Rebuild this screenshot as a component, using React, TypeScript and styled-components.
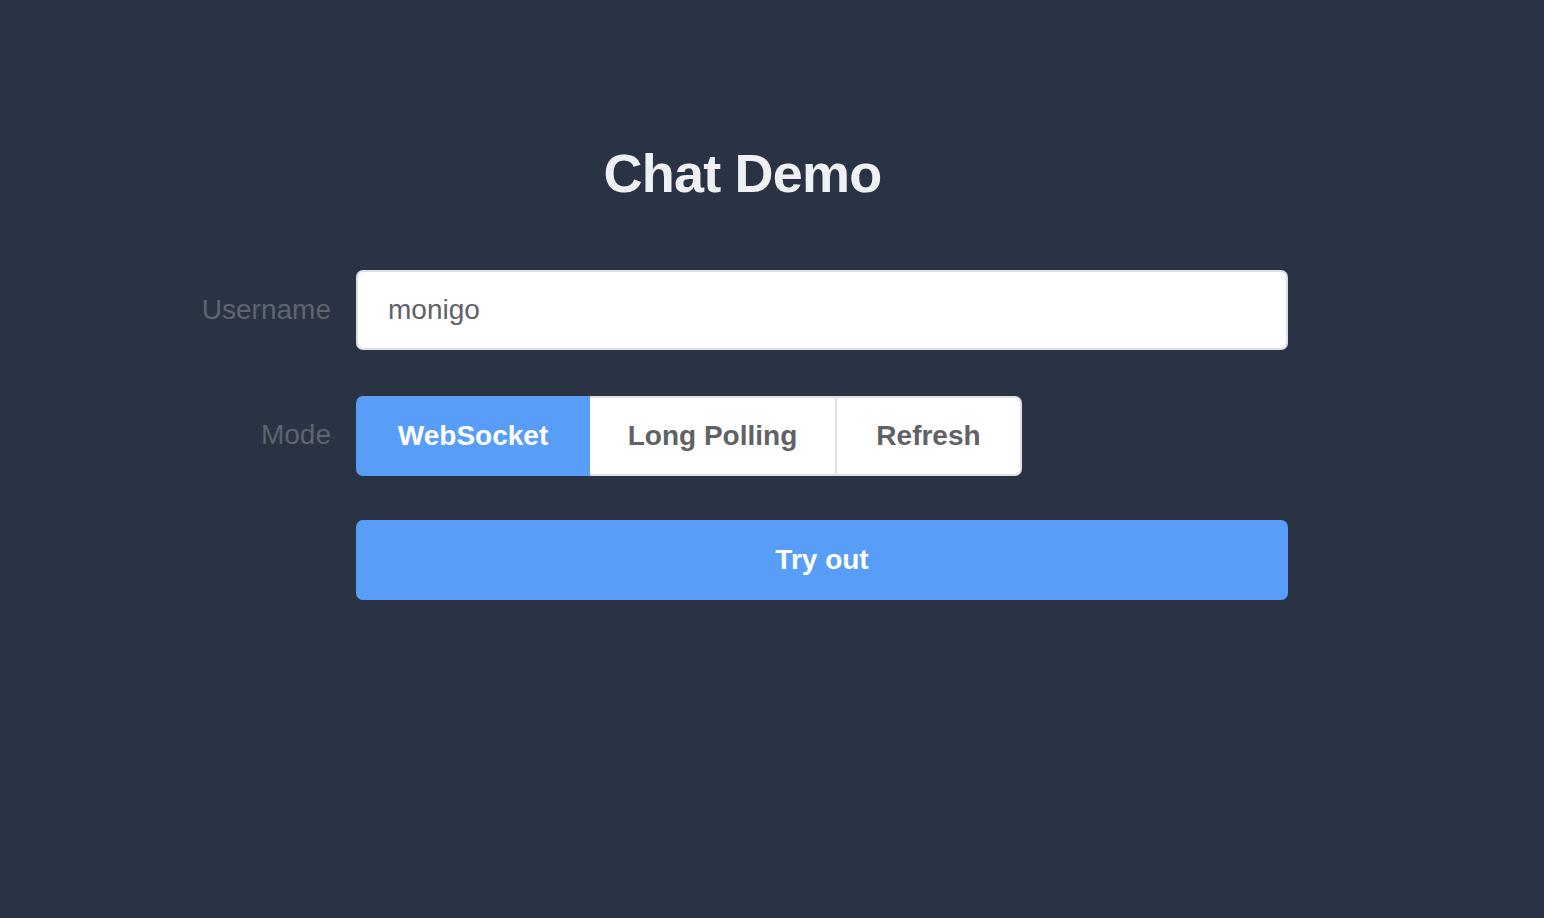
import React from "react";
import styled, { createGlobalStyle } from "styled-components";

const Global = createGlobalStyle`
  html, body { margin: 0; padding: 0; background: #2a3344; }
  body { font-family: "Liberation Sans", Arial, sans-serif; }
  * { box-sizing: border-box; }
`;

const Page = styled.div`
  width: 1544px;
  height: 918px;
  background: #2a3344;
  padding-top: 140px;
`;

const Panel = styled.div`
  margin-left: 197px;
  width: 1091px;
  display: flex;
  flex-direction: column;
`;

const Title = styled.h1`
  margin: 0 0 64px 0;
  text-align: center;
  color: #eef0f3;
  font-size: 54px;
  font-weight: 700;
  letter-spacing: -0.8px;
  line-height: 66px;
`;

const Row = styled.div<{ $gap: number }>`
  display: grid;
  grid-template-columns: 159px 1fr;
  align-items: center;
  margin-bottom: ${(p) => p.$gap}px;
`;

const Label = styled.label<{ $shift?: number }>`
  text-align: right;
  padding-right: 25px;
  color: #5f646e;
  font-size: 28px;
  margin-top: ${(p) => p.$shift ?? 0}px;
`;

const Input = styled.input`
  height: 80px;
  width: 100%;
  border: 2px solid #dcdfe6;
  border-radius: 7px;
  background: #fff;
  padding: 0 30px;
  font-family: inherit;
  font-size: 28px;
  color: #606266;
  outline: none;
`;

const Group = styled.div`
  display: flex;
`;

const Seg = styled.button<{ $active?: boolean; $w: number }>`
  width: ${(p) => p.$w}px;
  height: 80px;
  border: 2px solid ${(p) => (p.$active ? "#589ef8" : "#dcdfe6")};
  border-left-width: ${(p) => (p.$active ? 2 : 0)}px;
  background: ${(p) => (p.$active ? "#589ef8" : "#fff")};
  color: ${(p) => (p.$active ? "#fff" : "#606266")};
  font-family: inherit;
  font-size: 28px;
  font-weight: 700;
  padding: 0;
  &:first-child { border-radius: 7px 0 0 7px; }
  &:last-child { border-radius: 0 7px 7px 0; }
`;

const Submit = styled.button`
  grid-column: 2;
  height: 80px;
  width: 100%;
  border: none;
  border-radius: 7px;
  background: #589ef8;
  color: #fff;
  font-family: inherit;
  font-size: 28px;
  font-weight: 700;
`;

export default function App() {
  return (
    <Page>
      <Global />
      <Panel>
        <Title>Chat Demo</Title>
        <Row $gap={46}>
          <Label>Username</Label>
          <Input defaultValue="monigo" />
        </Row>
        <Row $gap={44}>
          <Label $shift={-2}>Mode</Label>
          <Group>
            <Seg $active $w={234}>WebSocket</Seg>
            <Seg $w={247}>Long Polling</Seg>
            <Seg $w={185}>Refresh</Seg>
          </Group>
        </Row>
        <Row $gap={0}>
          <Submit>Try out</Submit>
        </Row>
      </Panel>
    </Page>
  );
}
